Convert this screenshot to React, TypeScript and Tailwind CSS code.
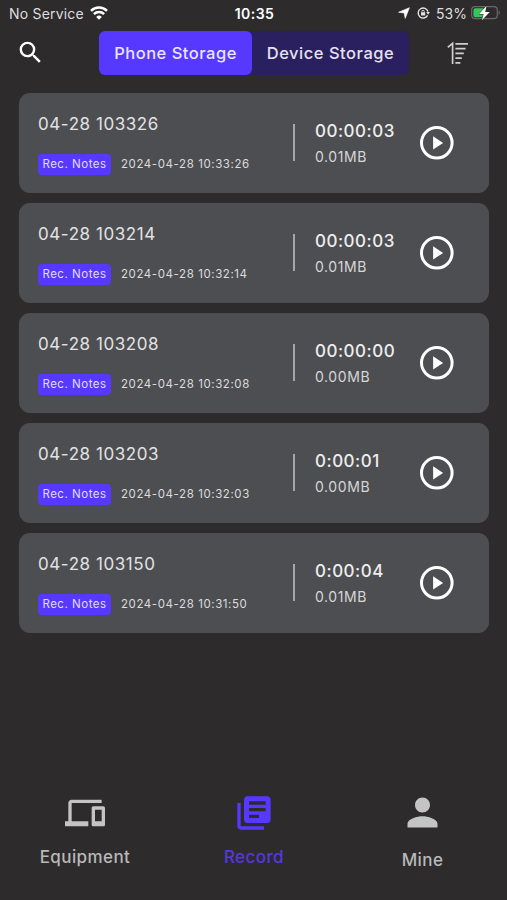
import { MdDevices, MdLibraryBooks, MdPerson, MdSearch } from 'react-icons/md';

type Recording = {
  name: string;
  date: string;
  duration: string;
  size: string;
};

const recordings: Recording[] = [
  { name: '04-28 103326', date: '2024-04-28 10:33:26', duration: '00:00:03', size: '0.01MB' },
  { name: '04-28 103214', date: '2024-04-28 10:32:14', duration: '00:00:03', size: '0.01MB' },
  { name: '04-28 103208', date: '2024-04-28 10:32:08', duration: '00:00:00', size: '0.00MB' },
  { name: '04-28 103203', date: '2024-04-28 10:32:03', duration: '0:00:01', size: '0.00MB' },
  { name: '04-28 103150', date: '2024-04-28 10:31:50', duration: '0:00:04', size: '0.01MB' },
];

function WifiIcon() {
  return (
    <svg width="18" height="14" viewBox="0 0 18 14" fill="none" stroke="#fff" strokeWidth="2.5">
      <path d="M1 4.9a11.3 11.3 0 0 1 16 0" />
      <path d="M3.9 8.2a7.2 7.2 0 0 1 10.2 0" />
      <path d="M9 13.7 6.2 10.9a4 4 0 0 1 5.6 0z" fill="#fff" stroke="none" />
    </svg>
  );
}

function LockRotationIcon() {
  return (
    <svg width="13" height="12" viewBox="0 0 13 12" fill="none" stroke="#e4e4e4" strokeWidth="1.4">
      <path d="M10.6 8.4A5 5 0 1 1 11 4.6" />
      <path d="M9.2 5h3.7l-1.8 2.8z" fill="#e4e4e4" stroke="none" />
      <path d="M4.9 5.6V4.5a1.2 1.2 0 0 1 2.4 0v1.1" strokeWidth="0.9" />
      <rect x="4" y="5.3" width="4.2" height="3.2" rx="0.5" fill="#e4e4e4" stroke="none" />
    </svg>
  );
}

function BatteryIcon() {
  return (
    <svg width="30" height="16" viewBox="0 0 30 16" fill="none">
      <rect x="0.7" y="1.7" width="25.6" height="12" rx="3.4" stroke="#69686a" strokeWidth="1.2" />
      <path d="M27.6 5.6c1.6.5 1.6 3.8 0 4.3z" fill="#69686a" />
      <path d="M4.4 3.2h7.6v9H4.4a2 2 0 0 1-2-2v-5a2 2 0 0 1 2-2z" fill="#35c759" />
      <path d="M15.6.8 8 9h4.6l-1.7 6.2L18.8 7h-4.6z" fill="#fff" stroke="#2d2b2c" strokeWidth="1" paintOrder="stroke" />
    </svg>
  );
}

function StatusBar() {
  return (
    <div className="grid h-[26px] grid-cols-[1fr_auto_1fr] items-center pl-[9px] pr-[6px] text-[#dedede]">
      <div className="flex items-center gap-[6px]">
        <span className="text-[14px] tracking-[0.2px]">No Service</span>
        <WifiIcon />
      </div>
      <span className="mr-px text-[14px] font-semibold tracking-[0.45px] text-white">10:35</span>
      <div className="flex items-center justify-end">
        <svg width="12" height="12" viewBox="0 0 12 12" fill="#fff" stroke="#fff" strokeWidth="0.6" strokeLinejoin="round">
          <path d="M11.4.7 7.2 11.4 6.2 6 .6 5.2z" />
        </svg>
        <span className="ml-[7px]">
          <LockRotationIcon />
        </span>
        <span className="ml-[6px] mr-[4px] text-[14px]">53%</span>
        <BatteryIcon />
      </div>
    </div>
  );
}

function SortIcon() {
  return (
    <svg width="22" height="24" viewBox="0 0 22 24" fill="none" stroke="#d0d0d0" strokeWidth="1.7">
      <path d="M.8 6.4 5.6 2.4V23" />
      <path d="M8.4 2.8h12.6M8.4 7.6h10.2M8.4 12.4h8.4M8.4 17.2h6.4M8.4 21.8h5" />
    </svg>
  );
}

function Header() {
  return (
    <header className="flex h-[52px] items-center pl-4 pt-[1px]">
      <button className="text-white">
        <MdSearch size={29} />
      </button>
      <div className="ml-[54px] flex h-11 w-[310px] rounded-[6px] bg-[#2a1f5f]">
        <button className="w-[153px] rounded-[6px] bg-[#5638ff] pt-[2px] text-[16.5px] font-medium tracking-[0.5px] text-[#e9e6ff]">
          Phone Storage
        </button>
        <button className="flex-1 pt-[2px] text-[16.5px] font-medium tracking-[0.52px] text-[#e4e2f0]">
          Device Storage
        </button>
      </div>
      <button className="ml-[38px] pt-px">
        <SortIcon />
      </button>
    </header>
  );
}

function PlayIcon() {
  return (
    <svg width="34" height="34" viewBox="0 0 34 34">
      <circle cx="16.8" cy="16.8" r="15.3" fill="none" stroke="#fff" strokeWidth="3" />
      <path d="M13.1 10.2v13.4L23.1 16.9z" fill="#fff" />
    </svg>
  );
}

function RecordingCard({ name, date, duration, size }: Recording) {
  return (
    <li className="flex h-[100px] items-center rounded-[11px] bg-[#4d4e51] pl-[19px]">
      <div className="w-[255px] pt-[2px]">
        <p className="text-[17px] leading-[22px] tracking-[0.56px] text-[#e2e2e2]">{name}</p>
        <div className="mt-[19px] flex items-center gap-[10px]">
          <span className="h-[21px] w-[73px] rounded-[4px] bg-[#5638ff] text-center text-[11.5px] leading-[20px] tracking-[0.52px] text-[#e2dcff]">
            Rec. Notes
          </span>
          <span className="pb-[2px] text-[11.5px] leading-[20px] tracking-[0.58px] text-[#dcdcdc]">{date}</span>
        </div>
      </div>
      <div className="mb-px h-[37px] w-[2px] bg-[#a6a6a8]" />
      <div className="ml-5 w-[105px] pt-px">
        <p className="text-[17px] font-medium leading-[24px] tracking-[0.5px] text-[#ededed]">{duration}</p>
        <p className="mt-[2px] text-[14px] leading-[24px] tracking-[0.6px] text-[#d6d6d6]">{size}</p>
      </div>
      <button>
        <PlayIcon />
      </button>
    </li>
  );
}

function BottomNav() {
  return (
    <nav className="mt-auto grid h-[110px] grid-cols-3 text-[17px] font-medium tracking-[0.42px] text-[#b9b9b9]">
      <button className="flex flex-col items-center pt-[3px]">
        <MdDevices size={40} color="#c4c4c4" />
        <span className="mt-[12px] pl-px leading-6">Equipment</span>
      </button>
      <button className="flex flex-col items-center pt-[3px] text-[#5638e0]">
        <MdLibraryBooks size={40} color="#5638ff" />
        <span className="mt-[12px] pl-px leading-6">Record</span>
      </button>
      <button className="flex flex-col items-center">
        <MdPerson size={45} color="#c4c4c4" />
        <span className="mt-[13px] leading-6">Mine</span>
      </button>
    </nav>
  );
}

export default function App() {
  return (
    <div className="flex h-[900px] w-[507px] flex-col overflow-hidden bg-[#2d2b2c] font-['Inter',sans-serif]">
      <StatusBar />
      <Header />
      <ul className="ml-[19px] mt-[15px] flex w-[470px] flex-col gap-[10px]">
        {recordings.map((rec) => (
          <RecordingCard key={rec.name} {...rec} />
        ))}
      </ul>
      <BottomNav />
    </div>
  );
}
